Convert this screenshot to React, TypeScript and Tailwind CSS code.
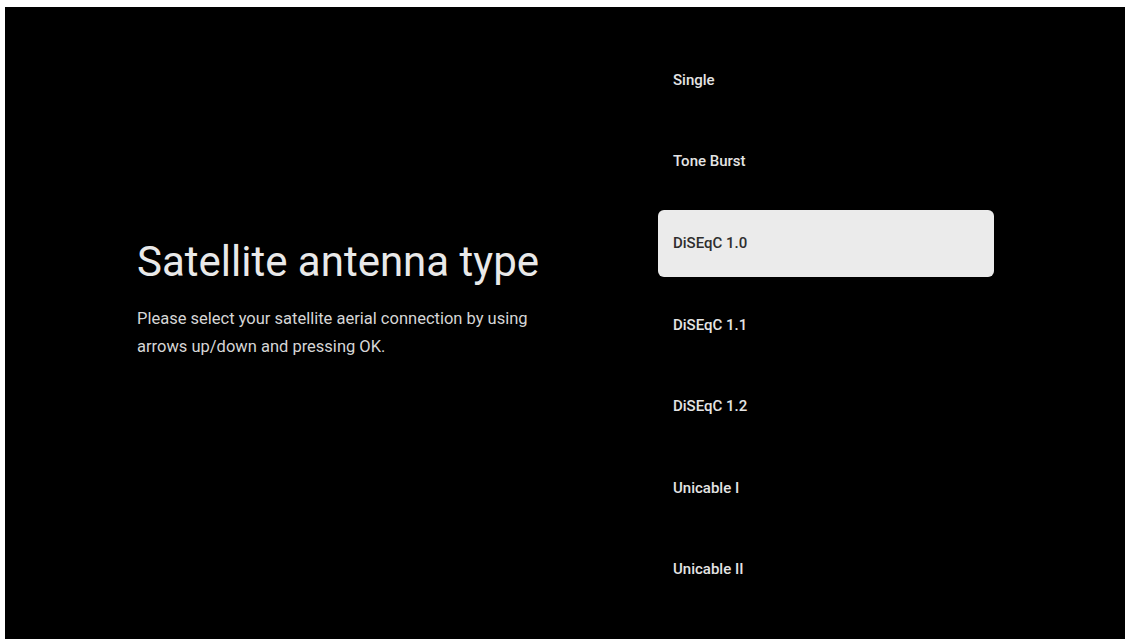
const options = [
  "Single",
  "Tone Burst",
  "DiSEqC 1.0",
  "DiSEqC 1.1",
  "DiSEqC 1.2",
  "Unicable I",
  "Unicable II",
];

const selected = "DiSEqC 1.0";

export default function App() {
  return (
    <div className="w-[1129px] h-[639px] bg-white pt-[7px] pl-[5px] pr-[4px] overflow-hidden">
      <div
        className="h-[632px] bg-black flex"
        style={{ fontFamily: "Roboto, 'Noto Sans', sans-serif" }}
      >
        {/* left: title + hint */}
        <div className="w-[653px] pl-[132px] pt-[230px]">
          <h1 className="text-[42px] leading-[50px] font-normal text-[#e9e9e9]">
            Satellite antenna type
          </h1>
          <p className="mt-[18px] w-[410px] text-[16.5px] leading-[28px] text-[#d6d6d6]">
            Please select your satellite aerial connection by using arrows up/down and pressing OK.
          </p>
        </div>

        {/* right: option list */}
        <ul className="pt-[39.5px] flex flex-col gap-[14.6px]">
          {options.map((o) => (
            <li
              key={o}
              className={`h-[67px] w-[336px] rounded-[6px] px-[15px] flex items-center text-[15px] font-medium ${
                o === selected ? "bg-[#ebebeb] text-[#2e2e2e]" : "text-[#e4e4e4]"
              }`}
            >
              {o}
            </li>
          ))}
        </ul>
      </div>
    </div>
  );
}
